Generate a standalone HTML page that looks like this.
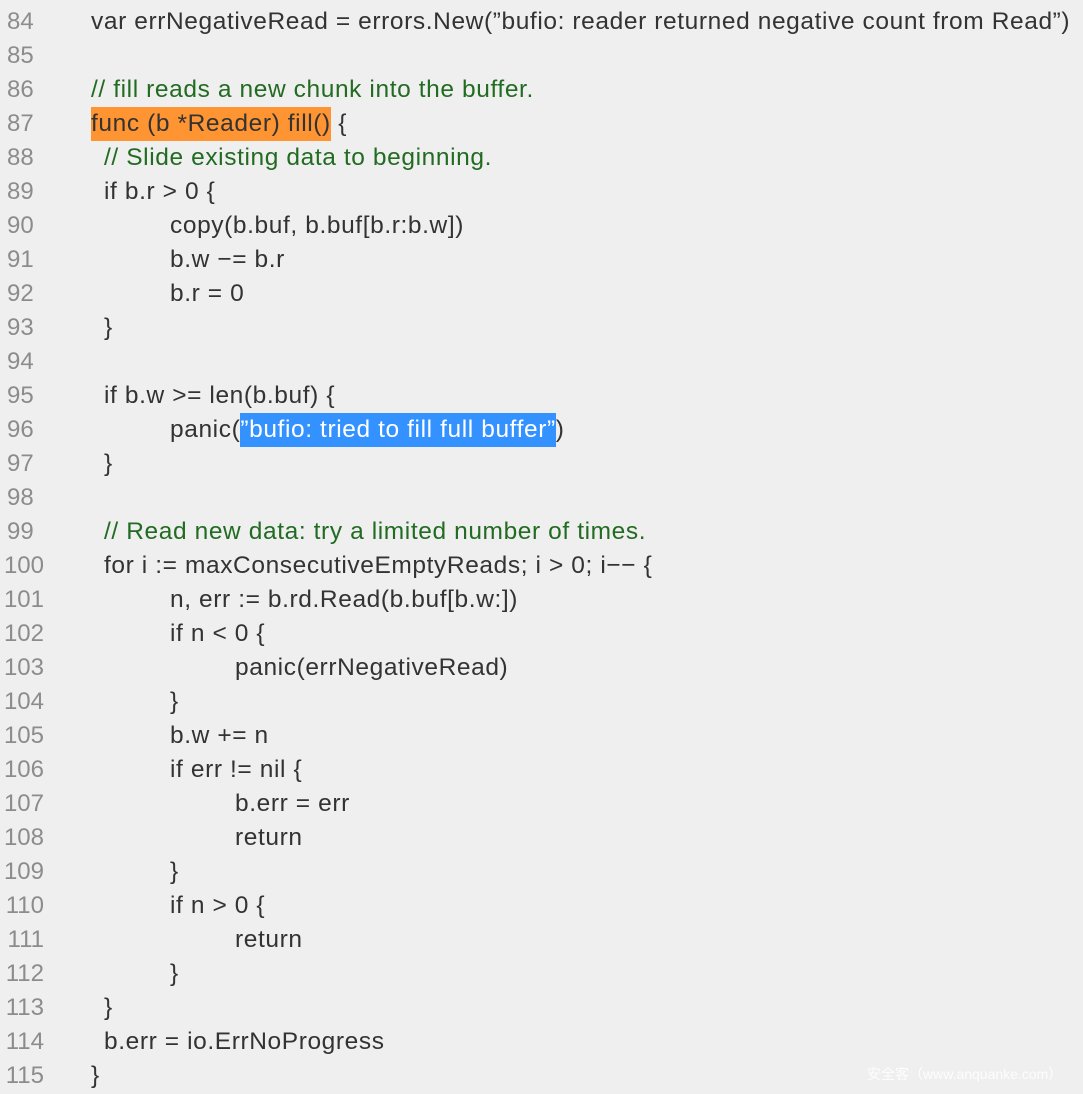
<!DOCTYPE html>
<html><head><meta charset="utf-8"><style>
body{margin:0;width:1083px;height:1094px;background:#efefef;overflow:hidden;font-family:"Liberation Sans","Noto Sans CJK SC",sans-serif;font-size:24.5px;color:#333;position:relative}
.l{position:absolute;height:34px;line-height:34px;white-space:pre;letter-spacing:0.6px}
.n{position:absolute;left:0;width:44px;height:34px;line-height:34px;color:#8c8c8c;text-align:right;font-size:24px}
.n.s{text-align:left;left:7px}
.c{color:#226b22}
.o{background:#ff9432;padding:3px 0 4px}
.b{background:#3392ff;color:#fff;padding:3px 0 4px}
.w{position:absolute;left:867px;top:1064px;font-size:14px;color:#fff;opacity:.9}
</style></head><body>
<div class="n s" style="top:5px">84</div><div class="l" style="top:5px;left:91px">var errNegativeRead = errors.New(”bufio: reader returned negative count from Read”)</div>
<div class="n s" style="top:39px">85</div>
<div class="n s" style="top:73px">86</div><div class="l c" style="top:73px;left:91px">// fill reads a new chunk into the buffer.</div>
<div class="n s" style="top:107px">87</div><div class="l" style="top:107px;left:91px"><span class="o">func (b *Reader) fill()</span> {</div>
<div class="n s" style="top:141px">88</div><div class="l c" style="top:141px;left:104px">// Slide existing data to beginning.</div>
<div class="n s" style="top:175px">89</div><div class="l" style="top:175px;left:104px">if b.r &gt; 0 {</div>
<div class="n s" style="top:209px">90</div><div class="l" style="top:209px;left:170px">copy(b.buf, b.buf[b.r:b.w])</div>
<div class="n s" style="top:243px">91</div><div class="l" style="top:243px;left:170px">b.w −= b.r</div>
<div class="n s" style="top:277px">92</div><div class="l" style="top:277px;left:170px">b.r = 0</div>
<div class="n s" style="top:311px">93</div><div class="l" style="top:311px;left:104px">}</div>
<div class="n s" style="top:345px">94</div>
<div class="n s" style="top:379px">95</div><div class="l" style="top:379px;left:104px">if b.w &gt;= len(b.buf) {</div>
<div class="n s" style="top:413px">96</div><div class="l" style="top:413px;left:170px">panic(<span class="b">”bufio: tried to fill full buffer”</span>)</div>
<div class="n s" style="top:447px">97</div><div class="l" style="top:447px;left:104px">}</div>
<div class="n s" style="top:481px">98</div>
<div class="n s" style="top:515px">99</div><div class="l c" style="top:515px;left:104px">// Read new data: try a limited number of times.</div>
<div class="n" style="top:549px">100</div><div class="l" style="top:549px;left:104px">for i := maxConsecutiveEmptyReads; i &gt; 0; i−− {</div>
<div class="n" style="top:583px">101</div><div class="l" style="top:583px;left:170px">n, err := b.rd.Read(b.buf[b.w:])</div>
<div class="n" style="top:617px">102</div><div class="l" style="top:617px;left:170px">if n &lt; 0 {</div>
<div class="n" style="top:651px">103</div><div class="l" style="top:651px;left:235px">panic(errNegativeRead)</div>
<div class="n" style="top:685px">104</div><div class="l" style="top:685px;left:170px">}</div>
<div class="n" style="top:719px">105</div><div class="l" style="top:719px;left:170px">b.w += n</div>
<div class="n" style="top:753px">106</div><div class="l" style="top:753px;left:170px">if err != nil {</div>
<div class="n" style="top:787px">107</div><div class="l" style="top:787px;left:235px">b.err = err</div>
<div class="n" style="top:821px">108</div><div class="l" style="top:821px;left:235px">return</div>
<div class="n" style="top:855px">109</div><div class="l" style="top:855px;left:170px">}</div>
<div class="n" style="top:889px">110</div><div class="l" style="top:889px;left:170px">if n &gt; 0 {</div>
<div class="n" style="top:923px">111</div><div class="l" style="top:923px;left:235px">return</div>
<div class="n" style="top:957px">112</div><div class="l" style="top:957px;left:170px">}</div>
<div class="n" style="top:991px">113</div><div class="l" style="top:991px;left:104px">}</div>
<div class="n" style="top:1025px">114</div><div class="l" style="top:1025px;left:104px">b.err = io.ErrNoProgress</div>
<div class="n" style="top:1059px">115</div><div class="l" style="top:1059px;left:91px">}</div>
<div class="w">安全客（www.anquanke.com）</div>
</body></html>
